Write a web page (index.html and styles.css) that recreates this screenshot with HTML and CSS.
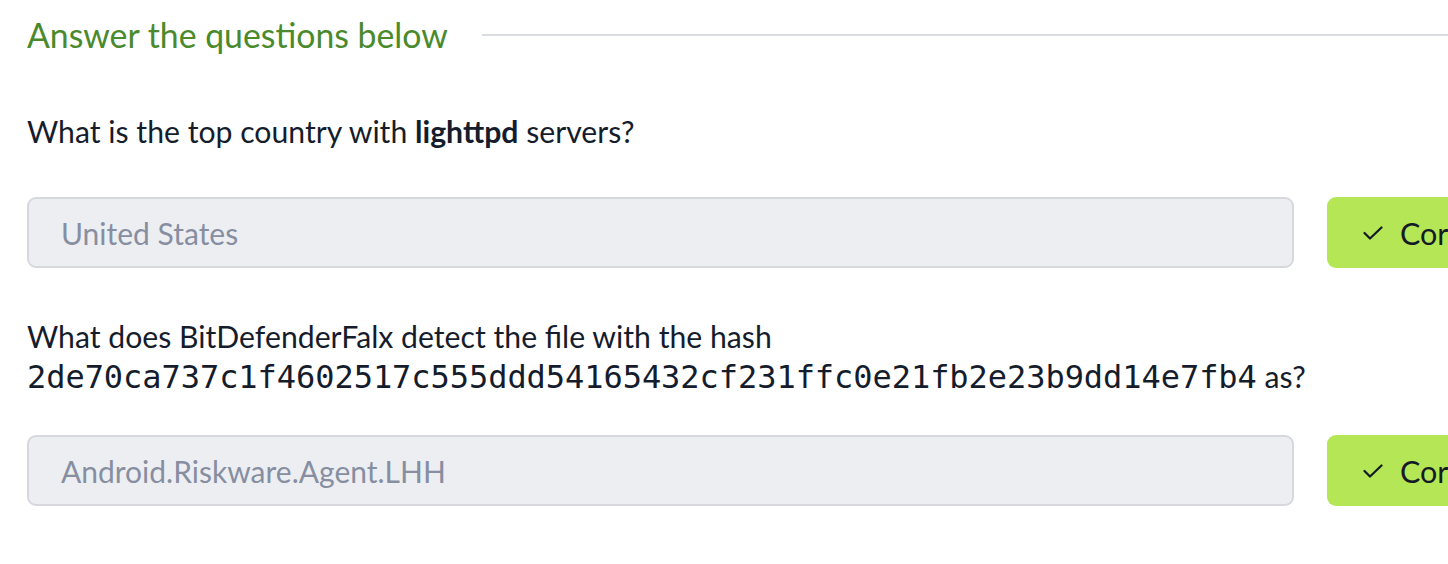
FILE: index.html
```html
<!DOCTYPE html>
<html>
<head>
<meta charset="utf-8">
<link rel="stylesheet" href="styles.css">
</head>
<body>
<div class="page">
  <div class="section-head">
    <h2 class="section-title">Answer the questions below</h2>
    <div class="section-rule"></div>
  </div>

  <div class="question q-first">
    <p class="q-text">What is the top country with <strong>lighttpd</strong> servers?</p>
    <div class="answer-row">
      <div class="answer-input">United States</div>
      <div class="answer-btn">
        <svg class="check" viewBox="0 0 20 14" width="20" height="14"><path d="M1.5 7 L7 12.5 L18.5 1.5" fill="none" stroke="#141a26" stroke-width="2.2" stroke-linecap="round" stroke-linejoin="round"/></svg>
        <span>Correct Answer</span>
      </div>
    </div>
  </div>

  <div class="question">
    <p class="q-text">What does BitDefenderFalx detect the file with the hash<br><code class="hash">2de70ca737c1f4602517c555ddd54165432cf231ffc0e21fb2e23b9dd14e7fb4</code> as?</p>
    <div class="answer-row answer-row-tight">
      <div class="answer-input">Android.Riskware.Agent.LHH</div>
      <div class="answer-btn">
        <svg class="check" viewBox="0 0 20 14" width="20" height="14"><path d="M1.5 7 L7 12.5 L18.5 1.5" fill="none" stroke="#141a26" stroke-width="2.2" stroke-linecap="round" stroke-linejoin="round"/></svg>
        <span>Correct Answer</span>
      </div>
    </div>
  </div>
</div>
</body>
</html>
```

FILE: styles.css
```css
html, body {
  margin: 0;
  padding: 0;
  background: #ffffff;
  overflow: hidden;
}
body {
  font-family: Lato, "Noto Sans", sans-serif;
  color: #151c2b;
}
.page {
  width: 1700px;
  padding: 13px 0 0 27px;
}
.section-head {
  display: flex;
  align-items: center;
  width: 1421px;
  gap: 34px;
}
.section-title {
  margin: 0;
  font-weight: 400;
  font-size: 33.8px;
  line-height: 44px;
  color: #4a8a2c;
  white-space: nowrap;
}
.section-rule {
  flex: 1;
  border-top: 2px solid #d9dce1;
  margin-top: -1px;
}
.q-first {
  margin-top: 54px;
}
.question + .question {
  margin-top: 48px;
}
.q-text {
  margin: 0;
  font-size: 30.2px;
  line-height: 40px;
}
.q-text strong {
  font-weight: 700;
}
.hash {
  font-family: "DejaVu Sans Mono", monospace;
  font-size: 32px;
  line-height: 40px;
  letter-spacing: -0.05px;
}
.answer-row {
  display: flex;
  gap: 33px;
  margin-top: 46px;
}
.answer-row-tight {
  margin-top: 38px;
}
.answer-input {
  box-sizing: border-box;
  width: 1267px;
  height: 71px;
  background: #edeef2;
  border: 2px solid #d6d8de;
  border-radius: 9px;
  padding: 0 32px;
  display: flex;
  align-items: center;
  font-size: 30px;
  color: #878ea1;
}
.answer-btn {
  box-sizing: border-box;
  width: 300px;
  height: 71px;
  background: #b4e655;
  border-radius: 9px;
  display: flex;
  align-items: center;
  gap: 17px;
  padding-left: 36px;
  font-size: 30.5px;
  color: #141a26;
  white-space: nowrap;
}
.check {
  flex: none;
}
```
